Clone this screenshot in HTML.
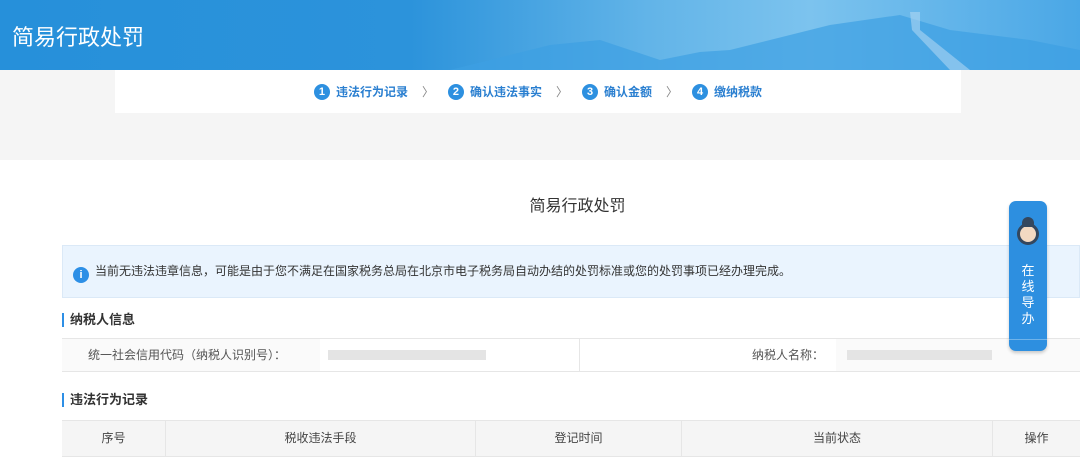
<!DOCTYPE html><html><head><meta charset="utf-8"><style>
*{margin:0;padding:0;box-sizing:border-box}
body{width:1080px;height:464px;overflow:hidden;background:#fff;font-family:"Liberation Sans","Noto Sans CJK SC",sans-serif;color:#333;position:relative}
.hd{position:absolute;left:0;top:0;width:1080px;height:70px;background:linear-gradient(90deg,#2690da 0%,#2c93db 38%,#62b4e8 60%,#7cc3ee 75%,#4aa7e6 100%);overflow:hidden}
.hd h1{position:absolute;left:12px;top:20px;color:#fff;font-weight:normal;font-size:22px}
.gray{position:absolute;top:70px;left:0;width:1080px;height:90px;background:#f5f5f5}
.steps{position:absolute;left:115px;top:70px;width:846px;height:43px;background:#fff;display:flex;justify-content:center;align-items:center;font-size:12px;font-weight:bold;color:#2a7fd0}
.n{display:inline-block;width:16px;height:16px;border-radius:50%;background:#2d90e0;color:#fff;font-size:11px;line-height:16px;text-align:center;margin-right:6px}
.ar{color:#888;margin:0 14px;font-weight:normal}
.abs{position:absolute}
</style></head><body>
<div class="hd"><svg class="abs" style="left:430px;top:0" width="650" height="70"><path d="M20 70 L120 45 L170 40 L230 60 L270 52 L300 50 L360 35 L400 25 L470 15 L520 30 L600 40 L650 50 L650 70Z" fill="#3d9fe2" opacity=".7"/><path d="M480 12 L490 12 L490 30 L540 70 L520 70 L482 30Z" fill="#aed6f2" opacity=".6"/></svg><h1>简易行政处罚</h1></div>
<div class="gray"></div>
<div class="steps"><span class="n">1</span>违法行为记录<span class="ar">〉</span><span class="n">2</span>确认违法事实<span class="ar">〉</span><span class="n">3</span>确认金额<span class="ar">〉</span><span class="n">4</span>缴纳税款</div>
<div class="abs" style="left:0;top:192px;width:1155px;text-align:center;font-size:16px;color:#333">简易行政处罚</div>
<div class="abs" style="left:62px;top:245px;width:1018px;height:53px;background:#eaf4fe;border:1px solid #dbe9f7;font-size:12px;line-height:51px;padding-left:10px"><span style="display:inline-block;width:16px;height:16px;border-radius:50%;background:#2d8fe6;color:#fff;text-align:center;font-size:11px;line-height:16px;font-weight:bold;vertical-align:-3px;margin-right:6px">i</span>当前无违法违章信息，可能是由于您不满足在国家税务总局在北京市电子税务局自动办结的处罚标准或您的处罚事项已经办理完成。</div>
<div class="abs" style="left:62px;top:313px;border-left:2px solid #2d8fe6;padding-left:6px;font-size:13px;font-weight:bold;line-height:14px">纳税人信息</div>
<div class="abs" style="left:62px;top:338px;width:1018px;height:34px;border-top:1px solid #e6e6e6;border-bottom:1px solid #e6e6e6;font-size:12px;color:#555">
<div class="abs" style="left:0;top:0;width:258px;height:32px;background:#fafafa;line-height:32px;padding-left:26px">统一社会信用代码（纳税人识别号）：</div>
<div class="abs" style="left:266px;top:11px;width:158px;height:10px;background:#e4e4e4"></div>
<div class="abs" style="left:517px;top:0;width:257px;height:32px;border-left:1px solid #e6e6e6;line-height:32px;text-align:right;padding-right:12px">纳税人名称：</div>
<div class="abs" style="left:774px;top:0;width:244px;height:32px;background:#fafafa"></div>
<div class="abs" style="left:785px;top:11px;width:145px;height:10px;background:#e4e4e4"></div>
</div>
<div class="abs" style="left:62px;top:393px;border-left:2px solid #2d8fe6;padding-left:6px;font-size:13px;font-weight:bold;line-height:14px">违法行为记录</div>
<div class="abs" style="left:62px;top:420px;width:1018px;height:37px;background:#f5f5f5;border-top:1px solid #e6e6e6;border-bottom:1px solid #e6e6e6;font-size:12px;color:#444;line-height:35px">
<div class="abs" style="left:0;width:103px;text-align:center">序号</div>
<div class="abs" style="left:103px;width:310px;text-align:center;border-left:1px solid #e6e6e6">税收违法手段</div>
<div class="abs" style="left:413px;width:206px;text-align:center;border-left:1px solid #e6e6e6">登记时间</div>
<div class="abs" style="left:619px;width:311px;text-align:center;border-left:1px solid #e6e6e6">当前状态</div>
<div class="abs" style="left:930px;width:88px;text-align:center;border-left:1px solid #e6e6e6">操作</div>
</div>
<div class="abs" style="left:1009px;top:201px;width:38px;height:150px;border-radius:7px;background:#2d8fe0;box-shadow:0 2px 3px rgba(0,0,0,.2)">
<div class="abs" style="left:8px;top:22px;width:22px;height:22px;border-radius:50%;background:#f3d9c2;border:3px solid #34475e"></div>
<div class="abs" style="left:13px;top:16px;width:12px;height:10px;border-radius:6px 6px 0 0;background:#34475e"></div>
<div class="abs" style="left:0;top:62px;width:38px;color:#fff;font-size:13px;line-height:16px;text-align:center">在<br>线<br>导<br>办</div>
<div class="abs" style="left:0;top:138px;width:38px;border-top:1px solid #6fb3ea"></div>
</div>
</body></html>
